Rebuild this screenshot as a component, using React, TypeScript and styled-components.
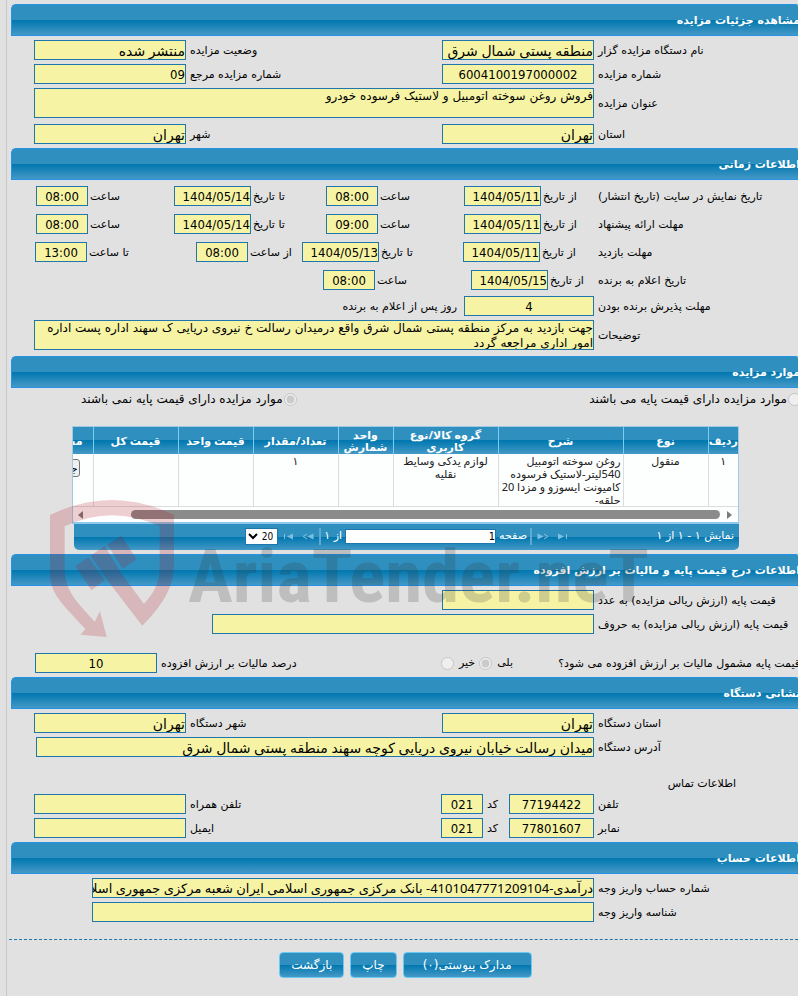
import React, { useId } from 'react';
import styled, { createGlobalStyle, css } from 'styled-components';

const textFont = '"DejaVu Sans", sans-serif';
const mixedFont = '"Noto Sans", "DejaVu Sans", sans-serif';
const numberFont = '"DejaVu Sans Condensed", "DejaVu Sans", sans-serif';

const GlobalStyle = createGlobalStyle`
  * { box-sizing: border-box; }
  body {
    margin: 0;
    background: #e1e1e1;
    color: #000;
    font: 11px/16px ${textFont};
    overflow-x: hidden;
  }
`;

const bluePanel = css`
  background: linear-gradient(#2f90bf 0 50%, #0077af 50%, #4499c6 100%);
`;

const Page = styled.main`
  position: relative;
  min-height: 100vh;
  margin-left: 6px;
  padding-top: 4px;
  border-left: 1px solid #c9c9c9;
`;

const Section = styled.section<{ $height?: number }>`
  margin-left: 4px;
  min-height: ${(p) => p.$height ?? 0}px;
`;

const SectionTitle = styled.h2`
  height: 32px;
  margin: 0;
  overflow: hidden;
  border: 1px solid #2492e6;
  border-right-width: 0;
  border-radius: 5px 2px 0 0;
  color: #fff;
  font-size: 11px;
  font-weight: bold;
  line-height: 31px;
  text-indent: -2px;
  white-space: nowrap;
  ${bluePanel}
`;

const Row = styled.div<{ $top?: number; $end?: number }>`
  display: flex;
  align-items: center;
  padding-top: ${(p) => p.$top ?? 4}px;
  padding-left: ${(p) => p.$end ?? 23}px;
  white-space: nowrap;
`;

const leadLook = css`
  flex: 0 0 204px;
  padding: 2px 0 0 4px;
  text-align: left;
`;

const Lead = styled.label`
  ${leadLook}
`;

const GroupLead = styled.span`
  ${leadLook}
`;

const Caption = styled.label<{ $width?: number; $pad?: number }>`
  ${(p) => (p.$width ? `flex: 0 0 ${p.$width}px;` : 'flex: 1;')}
  padding: 2px 0 0 ${(p) => p.$pad ?? 4}px;
  text-align: left;
`;

const Note = styled.span`
  padding: 2px 7px 0 0;
`;

const fieldLook = css`
  border: 1px solid #1f76ad;
  border-radius: 0;
  background: #f6f4a4;
  color: #000;
  outline: none;
`;

type Kind = 'text' | 'account' | 'number' | 'date';

const fieldFonts: Record<Kind, string> = {
  text: `14px ${mixedFont}`,
  account: `13px ${mixedFont}`,
  number: `13px ${numberFont}`,
  date: `13px ${numberFont}`,
};

const Box = styled.input<{ $width?: number; $kind: Kind }>`
  ${fieldLook}
  ${(p) => (p.$width ? `flex: 0 0 ${p.$width}px; width: ${p.$width}px;` : 'flex: 1; min-width: 0;')}
  height: 20px;
  padding: 0;
  font: ${(p) => fieldFonts[p.$kind]};
  text-align: ${(p) => (p.$kind === 'number' ? 'center' : 'right')};
`;

const TextArea = styled.textarea`
  ${fieldLook}
  flex: 1;
  height: 30px;
  padding: 0;
  overflow: hidden;
  resize: none;
  font: 12px/15px ${textFont};
`;

type FieldProps = {
  label: string;
  value: string;
  width?: number;
  kind?: Kind;
  captionWidth?: number;
  pad?: number;
  lead?: boolean;
};

function Field({ label, value, width, kind = 'text', captionWidth, pad, lead }: FieldProps) {
  const id = useId();
  return (
    <>
      {lead ? (
        <Lead htmlFor={id}>{label}</Lead>
      ) : (
        <Caption htmlFor={id} $width={captionWidth} $pad={pad}>{label}</Caption>
      )}
      <Box id={id} readOnly value={value} $width={width} $kind={kind} />
    </>
  );
}

function LongField({ label, value }: { label: string; value: string }) {
  const id = useId();
  return (
    <>
      <Lead htmlFor={id}>{label}</Lead>
      <TextArea id={id} readOnly value={value} />
    </>
  );
}

function DateField({ label, value, gap }: { label: string; value: string; gap: number }) {
  return <Field label={label} value={value} width={77} kind="date" captionWidth={gap} pad={2} />;
}

function TimeField({ label, value, gap }: { label: string; value: string; gap?: number }) {
  return <Field label={label} value={value} width={52} kind="number" captionWidth={gap} pad={2} />;
}

const Choices = styled.div`
  display: flex;
  justify-content: space-between;
  align-items: center;
  margin: 0 -3px 0 70px;
  padding-top: 3px;
  font-size: 12px;
`;

const Choice = styled.label`
  display: flex;
  align-items: center;
  gap: 1px;
  white-space: nowrap;
`;

const Radio = styled.input`
  width: 13px;
  height: 13px;
  margin: 0;
`;

const Grid = styled.div`
  margin: 19px 59px 0 61px;
`;

const GridView = styled.div`
  overflow: hidden;
  border: 1px solid #9fcbe6;
  border-bottom: 2px solid #8dc9ec;
  background: #fdfefe;
`;

const Table = styled.table`
  width: 715px;
  table-layout: fixed;
  border-collapse: collapse;
  color: #222;
  font-family: ${mixedFont};
`;

const Head = styled.th`
  height: 27px;
  padding: 0;
  border-left: 1px solid #79cdf3;
  color: #fff;
  font-size: 11px;
  line-height: 12px;
`;

const HeadRow = styled.tr`
  ${bluePanel}
`;

const Cell = styled.td<{ $align?: string }>`
  height: 52px;
  padding: 0 2px;
  border-left: 1px solid #dcdcdc;
  border-bottom: 1px solid #dcdcdc;
  line-height: 13px;
  text-align: ${(p) => p.$align ?? 'center'};
  vertical-align: top;
`;

const EdgeHead = styled(Head)`
  padding-right: 10px;
  text-align: right;
`;

const EdgeCell = styled(Cell)`
  padding: 5px 13px 0 0;
  text-align: right;
`;

const SmallButton = styled.button`
  height: 18px;
  padding: 0 1px;
  border: 1px solid #777;
  border-radius: 3px;
  background: #efefef;
  font: 11px ${textFont};
`;

const ScrollBar = styled.div`
  display: flex;
  align-items: center;
  gap: 7px;
  height: 15px;
  padding: 0 6px 0 5px;
`;

const Thumb = styled.div`
  flex: 1;
  height: 9px;
  margin-left: 41px;
  border-radius: 5px;
  background: #8b8b8b;
`;

const Pager = styled.div`
  display: flex;
  align-items: center;
  height: 26px;
  margin-left: 2px;
  padding: 0 5px 2px;
  border-radius: 0 0 5px 5px;
  color: #fff;
  ${bluePanel}
`;

const Range = styled.span`
  flex: 0 0 164px;
`;

const PagerControls = styled.div`
  display: flex;
  flex: 1;
  align-items: center;
  gap: 3px;
  white-space: nowrap;
`;

const PageInput = styled.input`
  width: 151px;
  height: 15px;
  padding: 0;
  border: 1px solid #1f76ad;
  background: #fff;
  font: 11px ${numberFont};
  text-align: right;
`;

const PageSize = styled.select`
  width: 33px;
  height: 17px;
  padding: 0;
  border: 1px solid #1f76ad;
  background: #fff;
  color: #000;
  font: 10px ${numberFont};
`;

const PagerButton = styled.button`
  display: flex;
  width: 16px;
  height: 12px;
  padding: 0;
  border: 0;
  background: none;
  justify-content: center;
  align-items: center;
`;

const Divider = styled.i`
  width: 2px;
  height: 17px;
  background: #5ea9cf;
`;

const Question = styled.span`
  flex: 0 0 287px;
  margin-right: -2px;
  padding-top: 2px;
`;

const Answer = styled.label`
  display: flex;
  align-items: center;
  gap: 5px;
  padding-left: 4px;
`;

const Subheading = styled.p`
  margin: 0;
  padding: 19px 62px 0 0;
`;

const Footer = styled.footer`
  display: flex;
  justify-content: center;
  gap: 6px;
  margin: 17px 0 0 2px;
  padding: 12px 0 17px 4px;
  border-top: 1px dashed #1f76ad;
`;

const Action = styled.button`
  height: 26px;
  padding: 0 11px;
  border: 1px solid #6cc8f2;
  border-radius: 4px;
  color: #fff;
  font: 12px ${textFont};
  ${bluePanel}
`;

const WideAction = styled(Action)`
  padding: 0 19px;
`;

const Watermark = styled.svg`
  position: absolute;
  top: 494px;
  left: 37px;
  pointer-events: none;
`;

function PagerIcon({ kind }: { kind: 'first' | 'prev' | 'next' | 'last' }) {
  const pointsLeft = kind === 'next' || kind === 'last';
  return (
    <svg width="12" height="7" viewBox="0 0 12 7" transform={pointsLeft ? undefined : 'scale(-1 1)'}>
      {kind === 'first' || kind === 'last' ? (
        <>
          <path d="M10 .5 4 3.5l6 3z" fill="#7cbfe0" />
          <path d="M1.5 1v5" stroke="#7cbfe0" fill="none" />
        </>
      ) : (
        <>
          <path d="M11.5 .5 5.5 3.5l6 3z" fill="#7cbfe0" />
          <path d="M5 1 1 3.5 5 6" stroke="#7cbfe0" fill="none" />
        </>
      )}
    </svg>
  );
}

function WatermarkLogo() {
  return (
    <Watermark width="620" height="150" viewBox="0 0 620 150" direction="ltr" aria-hidden="true">
      <g transform="scale(.3333)" fill="#b01020" fillOpacity=".2">
        <path d="M18 63Q204-27 390 63V215C390 285 345 345 295 395L187 255 140 185 182 155 232 238 300 330C340 285 347 255 347 215V97Q204 30 62 97V225C62 290 100 325 152 383L168 352 188 429 110 422 124 405C60 335 18 300 18 240Z" />
        <path d="M94 217 134 190 182 259 142 289Z" />
        <path d="M190 152 232 125 278 196 236 224Z" />
      </g>
      <text x="144" y="108" fill="#333" fillOpacity=".2" fontFamily='"Roboto Condensed", "DejaVu Sans Condensed", sans-serif' fontSize="75" fontWeight="bold">
        AriaTender.neT
      </text>
    </Watermark>
  );
}

export default function App() {
  return (
    <>
      <GlobalStyle />
      <Page dir="rtl">
        <Section $height={144}>
          <SectionTitle>مشاهده جزئیات مزایده</SectionTitle>
          <Row>
            <Field lead label="نام دستگاه مزایده گزار" value="منطقه پستی شمال شرق" width={152} />
            <Field label="وضعیت مزایده" value="منتشر شده" width={152} />
          </Row>
          <Row>
            <Field lead label="شماره مزایده" value="6004100197000002" width={152} kind="number" />
            <Field label="شماره مزایده مرجع" value="09" width={152} kind="date" />
          </Row>
          <Row>
            <LongField label="عنوان مزایده" value="فروش روغن سوخته اتومبیل و لاستیک فرسوده خودرو" />
          </Row>
          <Row $top={6}>
            <Field lead label="استان" value="تهران" width={152} />
            <Field label="شهر" value="تهران" width={152} />
          </Row>
        </Section>

        <Section $height={208}>
          <SectionTitle>اطلاعات زمانی</SectionTitle>
          <Row $top={6} $end={25}>
            <GroupLead>تاریخ نمایش در سایت (تاریخ انتشار)</GroupLead>
            <DateField label="از تاریخ" value="1404/05/11" gap={53} />
            <TimeField label="ساعت" value="08:00" gap={86} />
            <DateField label="تا تاریخ" value="1404/05/14" gap={75} />
            <TimeField label="ساعت" value="08:00" />
          </Row>
          <Row $top={8} $end={25}>
            <GroupLead>مهلت ارائه پیشنهاد</GroupLead>
            <DateField label="از تاریخ" value="1404/05/11" gap={53} />
            <TimeField label="ساعت" value="09:00" gap={86} />
            <DateField label="تا تاریخ" value="1404/05/14" gap={75} />
            <TimeField label="ساعت" value="08:00" />
          </Row>
          <Row $top={8} $end={24}>
            <GroupLead>مهلت بازدید</GroupLead>
            <DateField label="از تاریخ" value="1404/05/11" gap={54} />
            <DateField label="تا تاریخ" value="1404/05/13" gap={84} />
            <TimeField label="از ساعت" value="08:00" gap={54} />
            <TimeField label="تا ساعت" value="13:00" />
          </Row>
          <Row $top={8}>
            <GroupLead>تاریخ اعلام به برنده</GroupLead>
            <DateField label="از تاریخ" value="1404/05/15" gap={46} />
            <TimeField label="ساعت" value="08:00" gap={96} />
          </Row>
          <Row $top={6}>
            <Field lead label="مهلت پذیرش برنده بودن" value="4" width={130} kind="number" />
            <Note>روز پس از اعلام به برنده</Note>
          </Row>
          <Row>
            <LongField
              label="توضیحات"
              value="جهت بازدید به مرکز منطقه پستی شمال شرق واقع درمیدان رسالت خ نیروی دریایی ک سهند اداره پست اداره امور اداری مراجعه گردد"
            />
          </Row>
        </Section>

        <Section $height={198}>
          <SectionTitle>موارد مزایده</SectionTitle>
          <Choices>
            <Choice>
              <Radio type="radio" name="base-price" disabled />
              موارد مزایده دارای قیمت پایه می باشند
            </Choice>
            <Choice>
              <Radio type="radio" name="base-price" disabled defaultChecked />
              موارد مزایده دارای قیمت پایه نمی باشند
            </Choice>
          </Choices>
          <Grid>
            <GridView>
              <Table>
                <colgroup>
                  <col width="30" />
                  <col width="85" />
                  <col width="125" />
                  <col width="105" />
                  <col width="55" />
                  <col width="85" />
                  <col width="75" />
                  <col width="85" />
                  <col width="70" />
                </colgroup>
                <thead>
                  <HeadRow>
                    <Head>ردیف</Head>
                    <Head>نوع</Head>
                    <Head>شرح</Head>
                    <Head>گروه کالا/نوع کاربری</Head>
                    <Head>واحد شمارش</Head>
                    <Head>تعداد/مقدار</Head>
                    <Head>قیمت واحد</Head>
                    <Head>قیمت کل</Head>
                    <EdgeHead>مشخصات</EdgeHead>
                  </HeadRow>
                </thead>
                <tbody>
                  <tr>
                    <Cell>۱</Cell>
                    <Cell>منقول</Cell>
                    <Cell $align="right">روغن سوخته اتومبیل 540لیتر-لاستیک فرسوده کامیونت ایسوزو و مزدا 20 حلقه-</Cell>
                    <Cell>لوازم یدکی وسایط نقلیه</Cell>
                    <Cell />
                    <Cell>۱</Cell>
                    <Cell />
                    <Cell />
                    <EdgeCell>
                      <SmallButton type="button">جزئیات</SmallButton>
                    </EdgeCell>
                  </tr>
                </tbody>
              </Table>
              <ScrollBar>
                <svg width="5" height="8" viewBox="0 0 5 8"><path d="M0 0 5 4 0 8z" fill="#7b7b7b" /></svg>
                <Thumb />
                <svg width="5" height="8" viewBox="0 0 5 8"><path d="M5 0 0 4 5 8z" fill="#7b7b7b" /></svg>
              </ScrollBar>
            </GridView>
            <Pager>
              <Range>نمایش ۱ - ۱ از ۱</Range>
              <PagerControls>
                <PagerButton type="button" aria-label="صفحه نخست"><PagerIcon kind="first" /></PagerButton>
                <PagerButton type="button" aria-label="صفحه قبل"><PagerIcon kind="prev" /></PagerButton>
                <Divider />
                <label htmlFor="page-number">صفحه</label>
                <PageInput id="page-number" defaultValue="1" />
                <span>از ۱</span>
                <Divider />
                <PagerButton type="button" aria-label="صفحه بعد"><PagerIcon kind="next" /></PagerButton>
                <PagerButton type="button" aria-label="صفحه آخر"><PagerIcon kind="last" /></PagerButton>
                <PageSize aria-label="تعداد در صفحه" defaultValue="20">
                  <option>20</option>
                </PageSize>
              </PagerControls>
            </Pager>
          </Grid>
        </Section>

        <Section $height={123}>
          <SectionTitle>اطلاعات درج قیمت پایه و مالیات بر ارزش افزوده</SectionTitle>
          <Row>
            <Field lead label="قیمت پایه (ارزش ریالی مزایده) به عدد" value="" width={152} />
          </Row>
          <Row $end={201}>
            <Field lead label="قیمت پایه (ارزش ریالی مزایده) به حروف" value="" />
          </Row>
          <Row $top={19} $end={24}>
            <Question>قیمت پایه مشمول مالیات بر ارزش افزوده می شود؟</Question>
            <Answer>
              <span>بلی</span>
              <Radio type="radio" name="vat" disabled defaultChecked />
            </Answer>
            <Answer>
              <span>خیر</span>
              <Radio type="radio" name="vat" disabled />
            </Answer>
            <Field label="درصد مالیات بر ارزش افزوده" value="10" width={122} kind="number" />
          </Row>
        </Section>

        <Section $height={165}>
          <SectionTitle>نشانی دستگاه</SectionTitle>
          <Row>
            <Field lead label="استان دستگاه" value="تهران" width={152} />
            <Field label="شهر دستگاه" value="تهران" width={152} />
          </Row>
          <Row $end={25}>
            <Field lead label="آدرس دستگاه" value="میدان رسالت خیابان نیروی دریایی کوچه سهند منطقه پستی شمال شرق" />
          </Row>
          <Subheading>اطلاعات تماس</Subheading>
          <Row $top={2}>
            <Field lead label="تلفن" value="77194422" width={85} kind="number" />
            <Field label="کد" value="021" width={42} kind="number" captionWidth={26} />
            <Field label="تلفن همراه" value="" width={152} />
          </Row>
          <Row>
            <Field lead label="نمابر" value="77801607" width={85} kind="number" />
            <Field label="کد" value="021" width={42} kind="number" captionWidth={26} />
            <Field label="ایمیل" value="" width={152} />
          </Row>
        </Section>

        <Section>
          <SectionTitle>اطلاعات حساب</SectionTitle>
          <Row $end={81}>
            <Field
              lead
              kind="account"
              label="شماره حساب واریز وجه"
              value="درآمدی-4101047771209104- بانک مرکزی جمهوری اسلامی ایران شعبه مرکزی جمهوری اسلامی"
            />
          </Row>
          <Row $end={81}>
            <Field lead label="شناسه واریز وجه" value="" />
          </Row>
        </Section>

        <Footer>
          <WideAction type="button">مدارک پیوستی(۰)</WideAction>
          <Action type="button">چاپ</Action>
          <Action type="button">بازگشت</Action>
        </Footer>
        <WatermarkLogo />
      </Page>
    </>
  );
}
